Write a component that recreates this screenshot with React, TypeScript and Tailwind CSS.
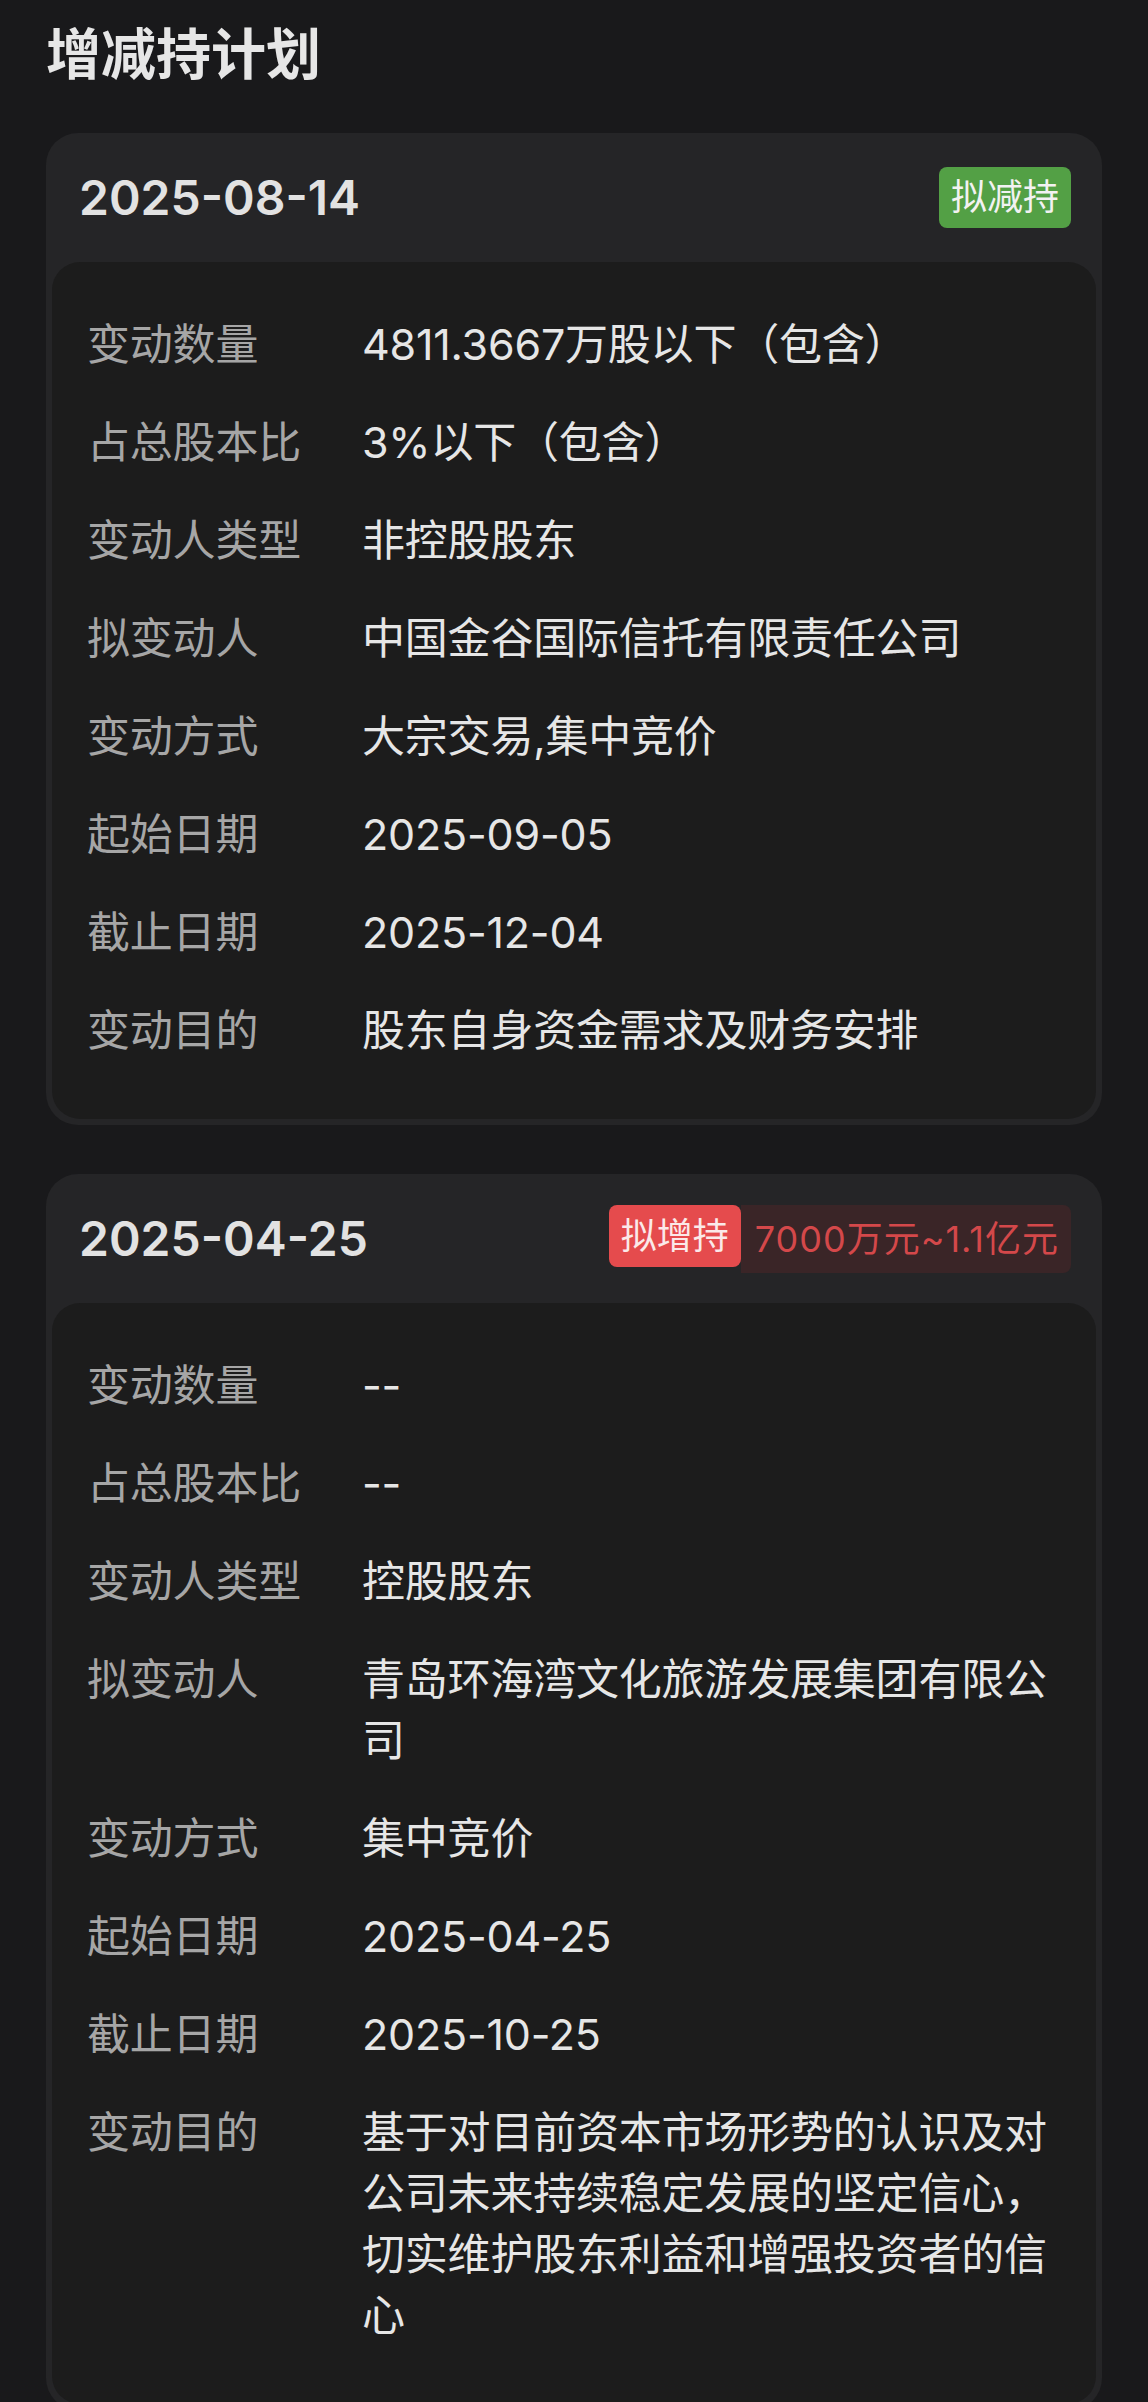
import React from 'react';

type Row = { label: string; value: string };

type Plan = {
  date: string;
  kind: 'down' | 'up';
  badge: string;
  amount?: string;
  rows: Row[];
};

const plans: Plan[] = [
  {
    date: '2025-08-14',
    kind: 'down',
    badge: '拟减持',
    rows: [
      { label: '变动数量', value: '4811.3667万股以下（包含）' },
      { label: '占总股本比', value: '3%以下（包含）' },
      { label: '变动人类型', value: '非控股股东' },
      { label: '拟变动人', value: '中国金谷国际信托有限责任公司' },
      { label: '变动方式', value: '大宗交易,集中竞价' },
      { label: '起始日期', value: '2025-09-05' },
      { label: '截止日期', value: '2025-12-04' },
      { label: '变动目的', value: '股东自身资金需求及财务安排' },
    ],
  },
  {
    date: '2025-04-25',
    kind: 'up',
    badge: '拟增持',
    amount: '7000万元~1.1亿元',
    rows: [
      { label: '变动数量', value: '--' },
      { label: '占总股本比', value: '--' },
      { label: '变动人类型', value: '控股股东' },
      { label: '拟变动人', value: '青岛环海湾文化旅游发展集团有限公司' },
      { label: '变动方式', value: '集中竞价' },
      { label: '起始日期', value: '2025-04-25' },
      { label: '截止日期', value: '2025-10-25' },
      {
        label: '变动目的',
        value: '基于对目前资本市场形势的认识及对公司未来持续稳定发展的坚定信心，切实维护股东利益和增强投资者的信心',
      },
    ],
  },
];

const PlanCard = ({ plan }: { plan: Plan }) => {
  return (
    <div className="rounded-[32px] bg-[#252527] px-[6px] pb-[6px]">
      <div className="flex h-[129px] items-center justify-between pl-[27px] pr-[25px]">
        <span className="text-[48px] font-semibold leading-none text-[#e2e2e2]">{plan.date}</span>
        {plan.kind === 'down' ? (
          <span className="rounded-[8px] bg-[#53a045] px-[12px] text-[36px] leading-[61px] text-[#f2f2f2]">
            {plan.badge}
          </span>
        ) : (
          <div className="flex items-start">
            <span className="rounded-[8px] bg-[#e54b4d] px-[12px] text-[36px] leading-[62px] text-[#fbe9e9]">
              {plan.badge}
            </span>
            <span className="rounded-r-[8px] bg-[#3a2527] pl-[14px] pr-[12px] text-[36px] leading-[68px] tracking-[1px] text-[#d4484a]">
              {plan.amount}
            </span>
          </div>
        )}
      </div>
      <div className="flex flex-col gap-[37px] rounded-[28px] bg-[#1c1c1c] pb-[58px] pl-[35px] pr-[40px] pt-[52px]">
        {plan.rows.map((row) => (
          <div key={row.label} className="flex text-[43px] leading-[61px] tracking-[-0.2px]">
            <div className="w-[275px] shrink-0 text-[#a6a6a6]">{row.label}</div>
            <div className="flex-1 text-[#e6e6e6]">{row.value}</div>
          </div>
        ))}
      </div>
    </div>
  );
};

const App = () => {
  return (
    <div className="min-h-screen bg-[#19191b] px-[46px] pb-[40px] pt-[24px] font-['Inter','Noto_Sans_CJK_SC',sans-serif]">
      <h1 className="mb-[49px] text-[55px] font-bold leading-[60px] text-[#e6e6e6]">增减持计划</h1>
      <div className="flex flex-col gap-[49px]">
        {plans.map((plan) => (
          <PlanCard key={plan.date} plan={plan} />
        ))}
      </div>
    </div>
  );
};

export default App;
